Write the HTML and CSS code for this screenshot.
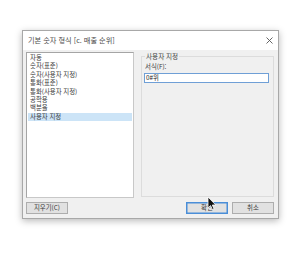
FILE: index.html
```html
<!DOCTYPE html>
<html lang="ko">
<head>
<meta charset="utf-8">
<link rel="stylesheet" href="styles.css">
</head>
<body>
<div class="dialog">
  <div class="titlebar">
    <span class="title">기본 숫자 형식 [c. 매출 순위]</span>
    <svg class="close" width="7" height="7" viewBox="0 0 7 7"><path d="M0.5 0.5L6.5 6.5M6.5 0.5L0.5 6.5" stroke="#555" stroke-width="0.9" fill="none"/></svg>
  </div>
  <div class="body">
    <div class="main">
      <ul class="list">
        <li>자동</li>
        <li>숫자(표준)</li>
        <li>숫자(사용자 지정)</li>
        <li>통화(표준)</li>
        <li>통화(사용자 지정)</li>
        <li>공학용</li>
        <li>백분율</li>
        <li class="sel">사용자 지정</li>
      </ul>
      <fieldset class="group">
        <legend>사용자 지정</legend>
        <div class="label">서식(F):</div>
        <div class="input">0#위</div>
      </fieldset>
    </div>
    <div class="footer">
      <button class="btn">지우기(C)</button>
      <div class="spacer"></div>
      <button class="btn primary">확인</button>
      <button class="btn">취소</button>
    </div>
  </div>
</div>
<svg class="cursor" width="10" height="15" viewBox="0 0 10 15"><path d="M1 1L1 12L3.6 9.6L5.4 13.6L7 12.9L5.3 9H8.8Z" fill="#111" stroke="#fff" stroke-width="0.8" stroke-linejoin="round"/></svg>
</body>
</html>
```
FILE: styles.css
```css
* { box-sizing: border-box; }
html, body { margin: 0; padding: 0; }
body {
  width: 305px;
  height: 253px;
  background: #ffffff;
  font-family: "Noto Sans CJK KR", "Noto Sans", sans-serif;
  color: #3a3a3a;
  position: relative;
  overflow: hidden;
  padding: 30px 0 0 22px;
}
.dialog {
  width: 257px;
  height: 189px;
  border: 1px solid #a8a8a8;
  background: #f0f0f0;
  box-shadow: 0 2px 7px rgba(0,0,0,0.28);
  display: flex;
  flex-direction: column;
}
.titlebar {
  height: 19px;
  background: #ffffff;
  display: flex;
  align-items: center;
  justify-content: space-between;
  padding: 0 5px 0 5px;
}
.title {
  font-size: 7.2px;
  color: #4a4a4a;
  line-height: 1;
}
.close { display: block; margin-top: 0; }
.body {
  flex: 1;
  display: flex;
  flex-direction: column;
  padding: 2px 4px 4px 3px;
}
.main {
  display: flex;
  gap: 7px;
  height: 146px;
}
.list {
  width: 108px;
  height: 146px;
  margin: 0;
  padding: 1px 1px;
  list-style: none;
  background: #ffffff;
  border: 1px solid #a5a5a5;
  border-right-color: #c8c8c8;
  border-bottom-color: #c8c8c8;
}
.list li {
  font-size: 6.4px;
  line-height: 8.4px;
  height: 8.4px;
  padding-left: 2px;
  white-space: nowrap;
  color: #3a3a3a;
}
.list li.sel {
  background: #cce4f7;
}
.group {
  flex: 1;
  margin: 0;
  padding: 0 4px 0 2px;
  border: 1px solid #dcdcdc;
  height: 145px;
  min-width: 0;
}
.group legend {
  font-size: 6.6px;
  line-height: 8px;
  height: 8px;
  padding: 0 1px;
  margin-left: 1px;
  color: #444;
}
.label {
  font-size: 6.4px;
  line-height: 8px;
  height: 8px;
  margin-top: 3px;
  padding-left: 1px;
}
.input {
  margin-top: 2px;
  height: 10px;
  border: 1px solid #6f9fd6;
  background: #ffffff;
  font-size: 6.4px;
  line-height: 8px;
  padding-left: 1px;
  color: #222;
}
.footer {
  display: flex;
  align-items: center;
  margin-top: 4px;
  gap: 4px;
}
.spacer { flex: 1; }
.btn {
  width: 42px;
  height: 12px;
  margin: 0;
  padding: 0;
  border: 1px solid #adadad;
  background: #e1e1e1;
  font-family: "Noto Sans CJK KR", "Noto Sans", sans-serif;
  font-size: 6.4px;
  line-height: 10px;
  color: #3a3a3a;
}
.btn.primary {
  border-color: #4a8ed8;
  box-shadow: inset 0 0 0 0.5px #4a8ed8;
}
.cursor {
  position: absolute;
  left: 207px;
  top: 196px;
}
```
